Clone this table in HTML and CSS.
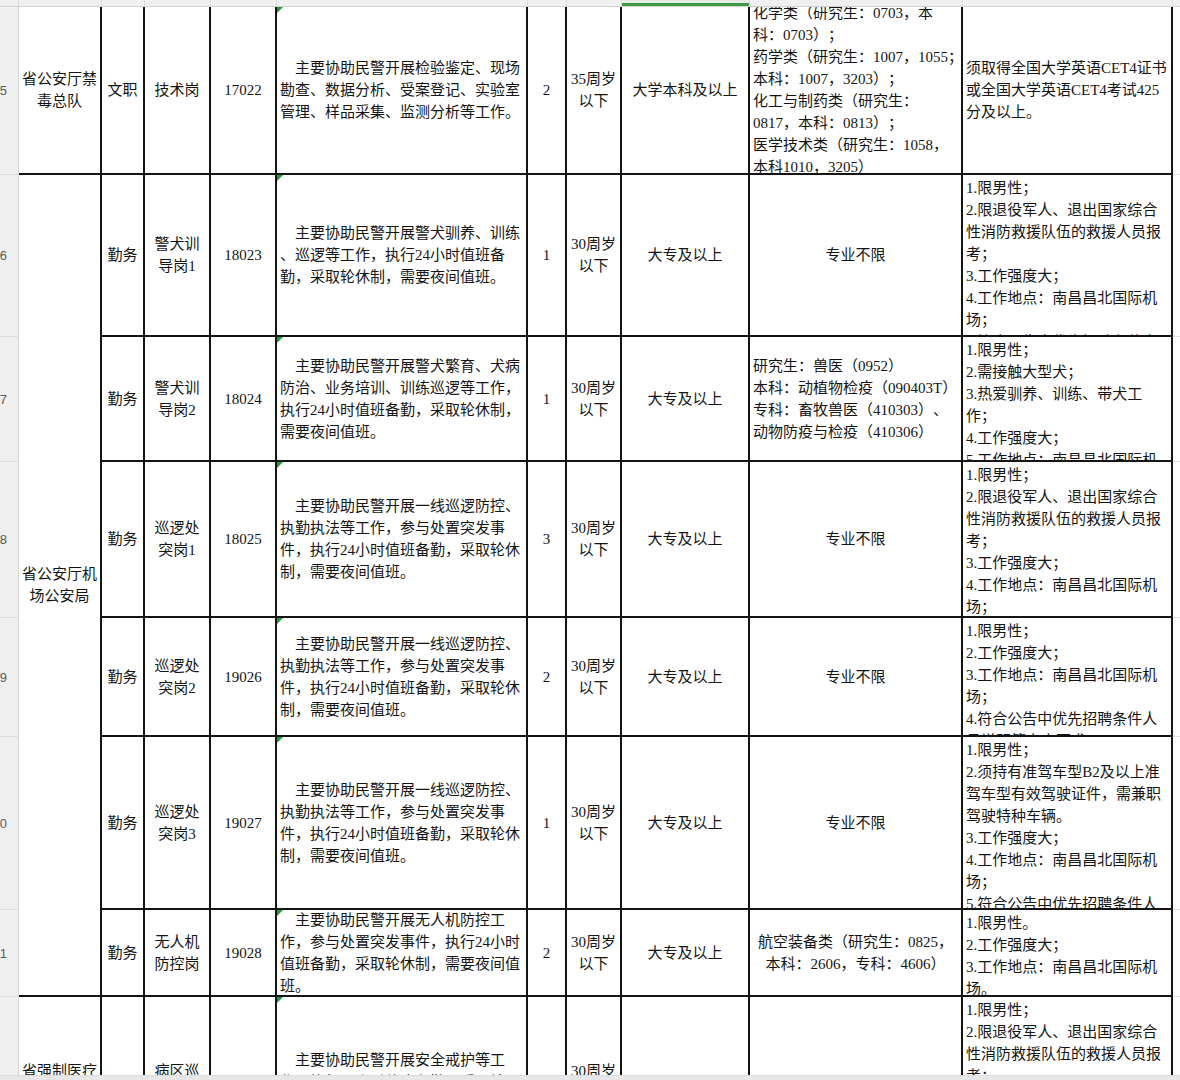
FILE: index.html
```html
<!DOCTYPE html>
<html lang="zh-CN">
<head>
<meta charset="utf-8">
<title>岗位表</title>
<link rel="stylesheet" href="styles.css">
</head>
<body>
<div class="colhead">
  <div class="hc"></div><div class="hc"></div><div class="hc"></div><div class="hc"></div><div class="hc"></div><div class="hc"></div><div class="hc"></div><div class="hc"></div><div class="hc sel"></div><div class="hc"></div><div class="hc"></div><div class="hc last"></div>
</div>
<div class="sheet">
  <!-- row 25 -->
  <div class="rh"><span>25</span></div>
  <div class="c ctr"><div>省公安厅禁<br>毒总队</div></div>
  <div class="c ctr"><div>文职</div></div>
  <div class="c ctr"><div>技术岗</div></div>
  <div class="c ctr"><div>17022</div></div>
  <div class="c lt desc"><div>主要协助民警开展检验鉴定、现场<br>勘查、数据分析、受案登记、实验室<br>管理、样品采集、监测分析等工作。</div></div>
  <div class="c ctr"><div>2</div></div>
  <div class="c ctr"><div>35周岁<br>以下</div></div>
  <div class="c ctr"><div>大学本科及以上</div></div>
  <div class="c lt"><div>化学类（研究生：0703，本<br>科：0703）；<br>药学类（研究生：1007，1055；<br>本科：1007，3203）；<br>化工与制药类（研究生：<br>0817，本科：0813）；<br>医学技术类（研究生：1058，<br>本科1010，3205）</div></div>
  <div class="c lt"><div>须取得全国大学英语CET4证书<br>或全国大学英语CET4考试425<br>分及以上。</div></div>
  <div class="rx"></div>

  <!-- row 26 -->
  <div class="rh"><span>26</span></div>
  <div class="c ctr merged"><div>省公安厅机<br>场公安局</div></div>
  <div class="c ctr"><div>勤务</div></div>
  <div class="c ctr"><div>警犬训<br>导岗1</div></div>
  <div class="c ctr"><div>18023</div></div>
  <div class="c lt desc"><div>主要协助民警开展警犬驯养、训练<br>、巡逻等工作，执行24小时值班备<br>勤，采取轮休制，需要夜间值班。</div></div>
  <div class="c ctr"><div>1</div></div>
  <div class="c ctr"><div>30周岁<br>以下</div></div>
  <div class="c ctr"><div>大专及以上</div></div>
  <div class="c ctr"><div>专业不限</div></div>
  <div class="c top"><div>1.限男性；<br>2.限退役军人、退出国家综合<br>性消防救援队伍的救援人员报<br>考；<br>3.工作强度大；<br>4.工作地点：南昌昌北国际机<br>场；<br>5.符合公告中优先招聘条件人<br>员；</div></div>
  <div class="rx"></div>

  <!-- row 27 -->
  <div class="rh"><span>27</span></div>
  <div class="c ctr"><div>勤务</div></div>
  <div class="c ctr"><div>警犬训<br>导岗2</div></div>
  <div class="c ctr"><div>18024</div></div>
  <div class="c lt desc"><div>主要协助民警开展警犬繁育、犬病<br>防治、业务培训、训练巡逻等工作，<br>执行24小时值班备勤，采取轮休制，<br>需要夜间值班。</div></div>
  <div class="c ctr"><div>1</div></div>
  <div class="c ctr"><div>30周岁<br>以下</div></div>
  <div class="c ctr"><div>大专及以上</div></div>
  <div class="c lt"><div>研究生：兽医（0952）<br>本科：动植物检疫（090403T）<br>专科：畜牧兽医（410303）、<br>动物防疫与检疫（410306）</div></div>
  <div class="c top"><div>1.限男性；<br>2.需接触大型犬；<br>3.热爱驯养、训练、带犬工<br>作；<br>4.工作强度大；<br>5.工作地点：南昌昌北国际机<br>场；</div></div>
  <div class="rx"></div>

  <!-- row 28 -->
  <div class="rh"><span>28</span></div>
  <div class="c ctr"><div>勤务</div></div>
  <div class="c ctr"><div>巡逻处<br>突岗1</div></div>
  <div class="c ctr"><div>18025</div></div>
  <div class="c lt desc"><div>主要协助民警开展一线巡逻防控、<br>执勤执法等工作，参与处置突发事<br>件，执行24小时值班备勤，采取轮休<br>制，需要夜间值班。</div></div>
  <div class="c ctr"><div>3</div></div>
  <div class="c ctr"><div>30周岁<br>以下</div></div>
  <div class="c ctr"><div>大专及以上</div></div>
  <div class="c ctr"><div>专业不限</div></div>
  <div class="c top"><div>1.限男性；<br>2.限退役军人、退出国家综合<br>性消防救援队伍的救援人员报<br>考；<br>3.工作强度大；<br>4.工作地点：南昌昌北国际机<br>场；</div></div>
  <div class="rx"></div>

  <!-- row 29 -->
  <div class="rh"><span>29</span></div>
  <div class="c ctr"><div>勤务</div></div>
  <div class="c ctr"><div>巡逻处<br>突岗2</div></div>
  <div class="c ctr"><div>19026</div></div>
  <div class="c lt desc"><div>主要协助民警开展一线巡逻防控、<br>执勤执法等工作，参与处置突发事<br>件，执行24小时值班备勤，采取轮休<br>制，需要夜间值班。</div></div>
  <div class="c ctr"><div>2</div></div>
  <div class="c ctr"><div>30周岁<br>以下</div></div>
  <div class="c ctr"><div>大专及以上</div></div>
  <div class="c ctr"><div>专业不限</div></div>
  <div class="c top"><div>1.限男性；<br>2.工作强度大；<br>3.工作地点：南昌昌北国际机<br>场；<br>4.符合公告中优先招聘条件人<br>员说明第六点要求。</div></div>
  <div class="rx"></div>

  <!-- row 30 -->
  <div class="rh"><span>30</span></div>
  <div class="c ctr"><div>勤务</div></div>
  <div class="c ctr"><div>巡逻处<br>突岗3</div></div>
  <div class="c ctr"><div>19027</div></div>
  <div class="c lt desc"><div>主要协助民警开展一线巡逻防控、<br>执勤执法等工作，参与处置突发事<br>件，执行24小时值班备勤，采取轮休<br>制，需要夜间值班。</div></div>
  <div class="c ctr"><div>1</div></div>
  <div class="c ctr"><div>30周岁<br>以下</div></div>
  <div class="c ctr"><div>大专及以上</div></div>
  <div class="c ctr"><div>专业不限</div></div>
  <div class="c top"><div>1.限男性；<br>2.须持有准驾车型B2及以上准<br>驾车型有效驾驶证件，需兼职<br>驾驶特种车辆。<br>3.工作强度大；<br>4.工作地点：南昌昌北国际机<br>场；<br>5.符合公告中优先招聘条件人<br>员；</div></div>
  <div class="rx"></div>

  <!-- row 31 -->
  <div class="rh"><span>31</span></div>
  <div class="c ctr"><div>勤务</div></div>
  <div class="c ctr"><div>无人机<br>防控岗</div></div>
  <div class="c ctr"><div>19028</div></div>
  <div class="c lt desc"><div>主要协助民警开展无人机防控工<br>作，参与处置突发事件，执行24小时<br>值班备勤，采取轮休制，需要夜间值<br>班。</div></div>
  <div class="c ctr"><div>2</div></div>
  <div class="c ctr"><div>30周岁<br>以下</div></div>
  <div class="c ctr"><div>大专及以上</div></div>
  <div class="c ctr"><div>航空装备类（研究生：0825，<br>本科：2606，专科：4606）</div></div>
  <div class="c top"><div>1.限男性。<br>2.工作强度大；<br>3.工作地点：南昌昌北国际机<br>场。</div></div>
  <div class="rx"></div>

  <!-- row 32 -->
  <div class="rh"><span>32</span></div>
  <div class="c ctr"><div>省强制医疗<br>所</div></div>
  <div class="c ctr"><div></div></div>
  <div class="c ctr"><div>病区巡<br>逻岗</div></div>
  <div class="c ctr"><div></div></div>
  <div class="c lt desc"><div>主要协助民警开展安全戒护等工<br>作，执行24小时值班备勤，采取轮<br>休制，需要夜间值班。</div></div>
  <div class="c ctr"><div></div></div>
  <div class="c ctr"><div>30周岁<br>以下</div></div>
  <div class="c ctr"><div></div></div>
  <div class="c ctr"><div></div></div>
  <div class="c top"><div>1.限男性；<br>2.限退役军人、退出国家综合<br>性消防救援队伍的救援人员报<br>考；<br>3.工作强度大；</div></div>
  <div class="rx"></div>
</div>
<div class="hscroll"></div>
</body>
</html>
```

FILE: styles.css
```css
html, body {
  margin: 0;
  padding: 0;
}

body {
  width: 1180px;
  height: 1080px;
  overflow: hidden;
  display: flex;
  flex-direction: column;
  background: #ffffff;
  font-family: "Liberation Serif", "Noto Sans CJK SC", serif;
  font-size: 15px;
  color: #141414;
  text-spacing-trim: space-all;
}

.colhead {
  display: grid;
  grid-template-columns: 19px 83px 43px 66px 66px 251px 39px 55px 128px 213px 210px 7px;
  height: 6px;
  border-bottom: 1px solid #d2d2d2;
  background: #f0f0f0;
  flex: none;
}

.hc {
  border-right: 1px solid #dadada;
  box-sizing: border-box;
}

.hc.sel {
  background: #e6ece6;
  box-shadow: inset 0 -3px 0 #3f9a47;
}

.hc.last {
  border-right: none;
}

.sheet {
  flex: 1;
  min-height: 0;
  overflow: hidden;
  display: grid;
  grid-template-columns: 19px 83px 43px 66px 66px 251px 39px 55px 128px 213px 210px 7px;
  grid-template-rows: 168px 162px 125px 156px 119px 173px 87px 172px;
}

.rh {
  background: #efefef;
  border-right: 1px solid #d4d4d4;
  border-bottom: 1px solid #dcdcdc;
  box-sizing: border-box;
  overflow: hidden;
  display: flex;
  align-items: center;
  justify-content: flex-end;
  padding-right: 11px;
  font-family: "Liberation Sans", "DejaVu Sans", sans-serif;
  font-size: 13px;
  color: #5a5a5a;
}

.rh span {
  white-space: nowrap;
}

.rx {
  border-bottom: 1px solid #e2e2e2;
  box-sizing: border-box;
}

.c {
  position: relative;
  box-sizing: border-box;
  border-right: 2px solid #141414;
  border-bottom: 2px solid #141414;
  overflow: hidden;
  display: flex;
  align-items: center;
  padding: 0 3px;
  line-height: 22px;
  white-space: nowrap;
}

.c.merged {
  grid-row: span 6;
}

.ctr {
  justify-content: center;
  text-align: center;
}

.lt {
  justify-content: flex-start;
  text-align: left;
}

.top {
  align-items: flex-start;
  justify-content: flex-start;
  text-align: left;
  padding-top: 2px;
}

.desc > div {
  text-indent: 15px;
}

.desc::before {
  content: "";
  position: absolute;
  top: 0;
  left: 0;
  border-top: 6px solid #1f9a3c;
  border-right: 6px solid transparent;
}

.hscroll {
  flex: none;
  height: 4px;
  background: #e7e7e7;
  border-top: 1px solid #dcdcdc;
}
```
